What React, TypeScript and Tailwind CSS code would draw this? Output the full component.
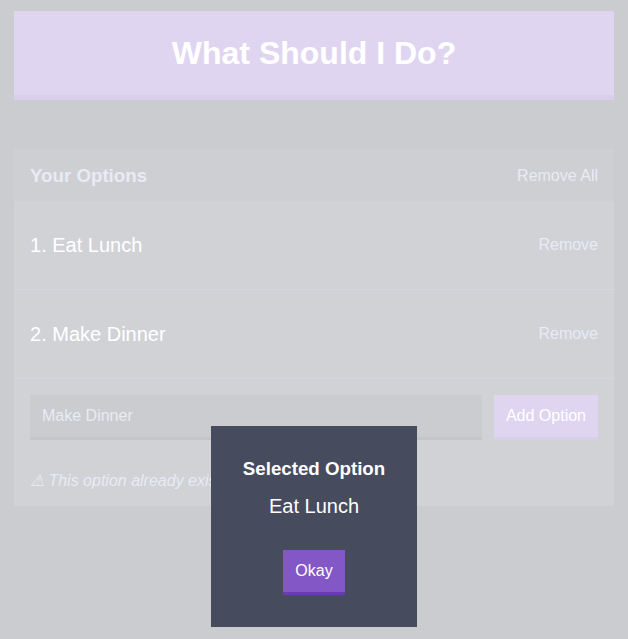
import { useState } from "react";

const font = { fontFamily: '"Liberation Sans", Helvetica, Arial, sans-serif' };

export default function App() {
    const [options] = useState(["Eat Lunch", "Make Dinner"]);
    const [selected] = useState("Eat Lunch");

    return (
        <div style={font} className="min-h-screen bg-[#333745] text-white">
            <div className="mx-auto w-[600px] pt-[11px]">
                <header className="h-[89px] bg-[#8357c5] border-b-[5px] border-[#6a3cae] flex items-center justify-center">
                    <h1 className="text-[32px] font-bold leading-none">What Should I Do?</h1>
                </header>

                <div className="mt-[49px] bg-[#464b5e]">
                    <div className="h-[52px] bg-[#3c4251] flex items-center justify-between px-4 pt-[2px]">
                        <h3 className="text-[18.72px] font-bold text-[#a5afd7]">Your Options</h3>
                        <button className="text-base text-[#a5afd7]">Remove All</button>
                    </div>

                    {options.map((option, i) => (
                        <div key={option} className="flex items-center justify-between px-4 py-[32px] border-b border-[#5b627b]">
                            <p className="text-[20px] leading-[23px]">{i + 1}. {option}</p>
                            <button className="text-base text-[#a5afd7]">Remove</button>
                        </div>
                    ))}

                    <form className="flex p-4">
                        <input
                            defaultValue="Make Dinner"
                            className="flex-1 mr-3 bg-[#333745] border-b-[3px] border-[#1d1f27] px-3 py-3 text-base leading-[18px] text-[#a5afd7] outline-none"
                        />
                        <button type="button" className="bg-[#8357c5] border-b-[3px] border-[#6a3cae] px-3 py-3 text-base leading-[18px] text-white">
                            Add Option
                        </button>
                    </form>
                    <p className="mx-4 mt-4 pb-4 italic text-base leading-[18px] text-[#a5afd7]">⚠ This option already exists</p>
                </div>
            </div>

            {/* modal overlay */}
            <div className="fixed inset-0 bg-[rgba(255,255,255,0.75)] flex justify-center items-start pt-[426px]">
                <div className="bg-[#464b5e] p-8 text-center text-white">
                    <h3 className="text-[18.72px] font-bold leading-[21px] mb-4">Selected Option</h3>
                    <p className="text-[20px] font-light leading-[23px] mb-8">{selected}</p>
                    <button className="bg-[#8357c5] border-b-[3px] border-[#6a3cae] px-3 py-3 text-base leading-[18px] text-white">
                        Okay
                    </button>
                </div>
            </div>
        </div>
    );
}
